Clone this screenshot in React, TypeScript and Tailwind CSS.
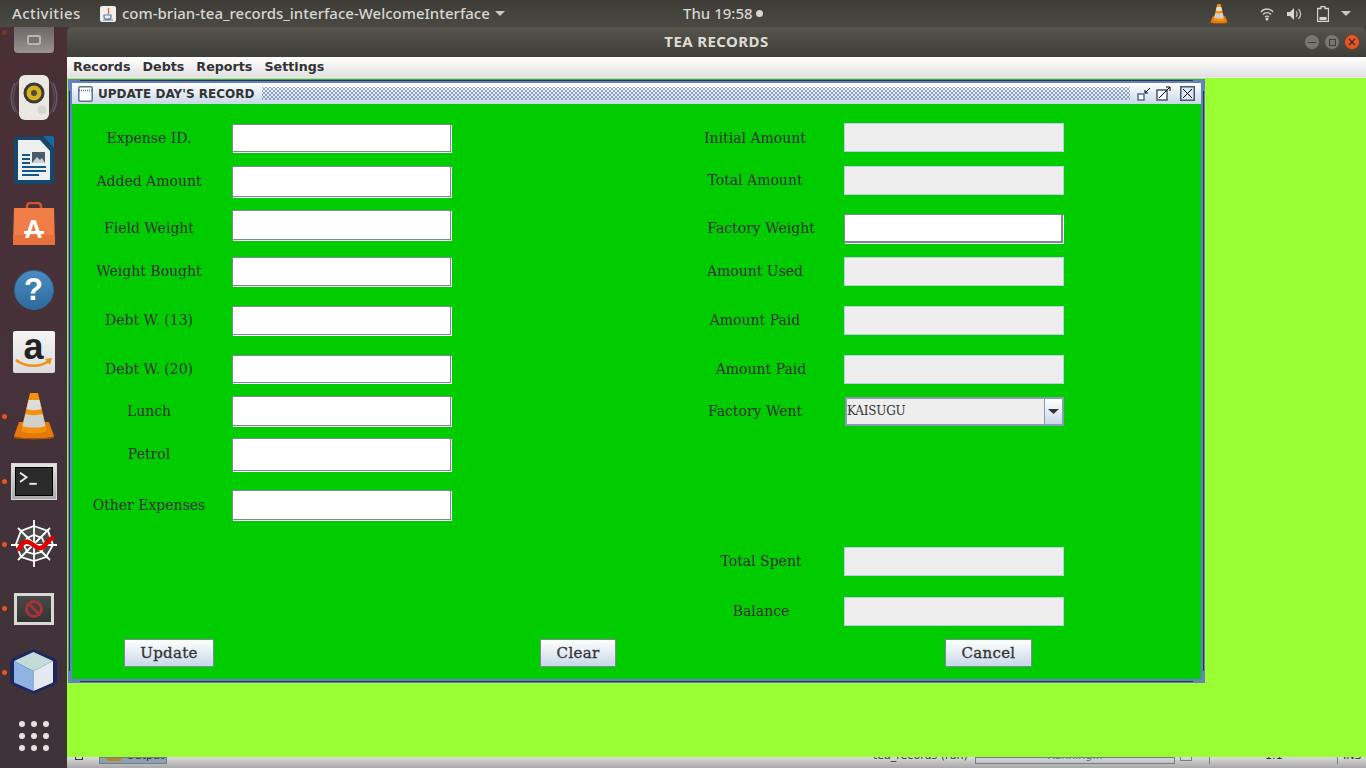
import React from 'react';

type Row = { label: string; gap: string; h: string; box: string; shift: string; kind?: 'edit' | 'off' | 'focus' | 'combo' };

const serif = "font-['DejaVu_Serif','Liberation_Serif',serif]";
const sans = "font-['DejaVu_Sans','Liberation_Sans',sans-serif]";

const leftRows: Row[] = [
  { label: 'Expense ID.', gap: 'mt-[20px]', h: 'h-[29px]', box: 'w-[144px] ml-[5px] mr-[11px]', shift: '' },
  { label: 'Added Amount', gap: 'mt-[13px]', h: 'h-[32px]', box: 'w-[144px] ml-[5px] mr-[11px]', shift: 'pb-[2px]' },
  { label: 'Field Weight', gap: 'mt-[12px]', h: 'h-[31px]', box: 'w-[144px] ml-[5px] mr-[11px]', shift: 'pt-[5px]' },
  { label: 'Weight Bought', gap: 'mt-[16px]', h: 'h-[30px]', box: 'w-[144px] ml-[5px] mr-[11px]', shift: 'pb-[2px]' },
  { label: 'Debt W. (13)', gap: 'mt-[19px]', h: 'h-[30px]', box: 'w-[144px] ml-[5px] mr-[11px]', shift: 'pb-[2px]' },
  { label: 'Debt W. (20)', gap: 'mt-[19px]', h: 'h-[29px]', box: 'w-[144px] ml-[5px] mr-[11px]', shift: '' },
  { label: 'Lunch', gap: 'mt-[12px]', h: 'h-[31px]', box: 'w-[144px] ml-[5px] mr-[11px]', shift: '' },
  { label: 'Petrol', gap: 'mt-[11px]', h: 'h-[34px]', box: 'w-[144px] ml-[5px] mr-[11px]', shift: 'pb-[2px]' },
  { label: 'Other Expenses', gap: 'mt-[18px]', h: 'h-[31px]', box: 'w-[144px] ml-[5px] mr-[11px]', shift: '' },
];

const rightRows: Row[] = [
  { label: 'Initial Amount', gap: 'mt-[19px]', h: 'h-[29px]', box: 'w-[130px] mr-[24px]', shift: 'pt-[1px]', kind: 'off' },
  { label: 'Total Amount', gap: 'mt-[14px]', h: 'h-[29px]', box: 'w-[130px] mr-[24px]', shift: '', kind: 'off' },
  { label: 'Factory Weight', gap: 'mt-[19px]', h: 'h-[29px]', box: 'w-[142px] mr-[12px]', shift: '', kind: 'focus' },
  { label: 'Amount Used', gap: 'mt-[14px]', h: 'h-[29px]', box: 'w-[130px] mr-[24px]', shift: 'pb-[1px]', kind: 'off' },
  { label: 'Amount Paid', gap: 'mt-[20px]', h: 'h-[29px]', box: 'w-[130px] mr-[24px]', shift: '', kind: 'off' },
  { label: 'Amount Paid', gap: 'mt-[20px]', h: 'h-[29px]', box: 'w-[142px] mr-[12px]', shift: '', kind: 'off' },
  { label: 'Factory Went', gap: 'mt-[13px]', h: 'h-[29px]', box: 'w-[130px] mr-[24px]', shift: '', kind: 'combo' },
  { label: 'Total Spent', gap: 'mt-[121px]', h: 'h-[29px]', box: 'w-[142px] mr-[12px]', shift: 'pb-[1px]', kind: 'off' },
  { label: 'Balance', gap: 'mt-[21px]', h: 'h-[29px]', box: 'w-[142px] mr-[12px]', shift: '', kind: 'off' },
];

function Field({ row }: { row: Row }) {
  return (
    <div className={`flex ${row.gap} ${row.h}`}>
      <div className={`${row.box} ${row.shift} flex items-center justify-center text-[14px] text-[#333333] ${serif}`}>{row.label}</div>
      {row.kind === 'combo' ? (
        <div className="flex w-[219px] h-full ml-[1px] border-2 border-[#8a9ab5] bg-[#eeeeee]">
          <div className={`flex-1 flex items-center pb-[2px] text-[12px] tracking-[-0.2px] text-[#333333] ${serif}`}>KAISUGU</div>
          <div className="w-[18px] flex items-center justify-center border-l border-[#8a9ab5] bg-gradient-to-b from-white to-[#c8d8e8]">
            <svg width="11" height="5" viewBox="0 0 11 5"><path d="M0 0h11L5.500 5z" fill="#333333" /></svg>
          </div>
        </div>
      ) : row.kind === 'off' ? (
        <div className="w-[220px] h-full border border-[#b8cfe5] bg-[#eeeeee]" />
      ) : row.kind === 'focus' ? (
        <div className="w-[219px] h-full border border-[#7a8a99] border-b-2 border-r-2 bg-white shadow-[1px_1px_0_#ffffff]" />
      ) : (
        <div className="w-[219px] h-[calc(100%-1px)] border border-[#7a8a99] bg-white shadow-[1px_1px_0_#ffffff]" />
      )}
    </div>
  );
}

function SwingButton({ label, cls }: { label: string; cls: string }) {
  return (
    <div className={`${cls} h-[28px] flex items-center justify-center border border-[#7a8a99] bg-gradient-to-b from-white to-[#c8d8e8] text-[15px] tracking-[0.3px] [-webkit-text-stroke:0.3px_#333333] text-[#333333] ${serif}`}>
      {label}
    </div>
  );
}

function Cone({ w, h }: { w: number; h: number }) {
  return (
    <svg width={w} height={h} viewBox="0 0 40 47">
      <path d="M5 29h30l5 14c0 3-40 3-40 0z" fill="#e8780a" />
      <path d="M0 43c0 3 40 3 40 0v1.500c0 2.500-40 2.500-40 0z" fill="#a8560a" />
      <path d="M16 0h8l9 38c-5 3-21 3-26 0z" fill="#f5910f" />
      <path d="M14.500 7h11l2 9c-4 1.500-11 1.500-15 0z" fill="#dcdcd8" />
      <path d="M11.500 21c4 1.500 13 1.500 17 0l3 12c-5 2-18 2-23 0z" fill="#d0d0cc" />
    </svg>
  );
}

function Dock() {
  return (
    <div className="relative w-[67px] h-[741px] shrink-0 flex flex-col items-center bg-gradient-to-b from-[#4a2f35] via-[#45323a] to-[#3d3338]">
      <span className="absolute left-[2px] top-[3px] w-[5px] h-[5px] rounded-full bg-[#7a3528]" />
      {[387, 452, 515, 579, 643].map((t, i) => (
        <span key={i} className="absolute left-[2px] w-[5px] h-[5px] rounded-full bg-[#e95420]" style={{ top: t }} />
      ))}
      {/* dragged launcher icon */}
      <div className="w-[40px] h-[26px] flex items-center justify-center rounded-b-sm bg-gradient-to-b from-[#6d6768] to-[#989292]">
        <div className="w-[14px] h-[10px] rounded-[2px] border-2 border-[#b8b4b2] bg-[#77706f]" />
      </div>
      <svg className="mt-[22px]" width="48" height="45" viewBox="0 0 48 45">
        <g fill="none" stroke="#7f8fa8" strokeWidth="1.500" opacity="0.45">
          <path d="M5 8c-5 9-5 20 0 29M43 8c5 9 5 20 0 29" />
          <path d="M8 6c-6 10-6 23 0 33M40 6c6 10 6 23 0 33" opacity="0.6" />
        </g>
        <rect x="9" y="0" width="30" height="45" rx="6" fill="#e9e9e2" />
        <circle cx="24" cy="18" r="10.500" fill="#3a3a36" />
        <circle cx="24" cy="18" r="7.500" fill="#d8b21c" />
        <circle cx="24" cy="18" r="3" fill="#4a4a40" />
        <circle cx="32" cy="35" r="4.500" fill="#d6d6d0" />
      </svg>
      <svg className="mt-[16px]" width="40" height="48" viewBox="0 0 40 48">
        <path d="M0 5a4 4 0 0 1 4-4h24l12 12v31a4 4 0 0 1-4 4H4a4 4 0 0 1-4-4z" fill="#12496f" />
        <path d="M29 0h9a2 2 0 0 1 2 2v10z" fill="#0f6aa5" />
        <path d="M4 4h22l10 11v29H4z" fill="#eef0f0" />
        <rect x="8" y="18" width="8" height="2" fill="#12568a" />
        <rect x="8" y="22" width="8" height="2" fill="#12568a" />
        <rect x="8" y="26" width="8" height="2" fill="#12568a" />
        <rect x="18" y="16" width="13" height="11" fill="#4a5a6a" />
        <path d="M18 27l5-6 3 3 2-2 3 5z" fill="#c8d0d8" />
        <rect x="8" y="30" width="24" height="2" fill="#12568a" />
        <rect x="8" y="34" width="24" height="2" fill="#12568a" />
        <rect x="8" y="38" width="17" height="2" fill="#12568a" />
      </svg>
      <div className="relative mt-[18px] w-[42px] h-[43px]">
        <svg className="absolute inset-0" width="42" height="43" viewBox="0 0 42 43">
          <path d="M14 12V4a3 3 0 0 1 3-3h8a3 3 0 0 1 3 3v8" fill="none" stroke="#d0552c" strokeWidth="2.500" />
          <path d="M1 6h40l1 37H0z" fill="#f07d45" />
          <path d="M0 33h42v10H0z" fill="#e8703a" />
        </svg>
        <span className="absolute inset-x-0 top-[15px] text-center text-[25px] leading-[25px] font-bold text-white font-['Liberation_Sans',sans-serif]">A</span>
        <span className="absolute left-[11px] top-[29px] w-[20px] h-[3px] bg-white" />
      </div>
      <div className="relative mt-[25px] w-[40px] h-[40px] rounded-full border border-[#2d6a9c] bg-gradient-to-b from-[#4a8dc0] to-[#2f6a9c] flex items-center justify-center text-[31px] font-bold text-white font-['Liberation_Sans',sans-serif]">?</div>
      <div className="relative mt-[21px] w-[42px] h-[42px] rounded-[2px] bg-gradient-to-b from-[#f5f5f5] to-[#dcdcdc]">
        <span className="absolute inset-x-0 top-[-3px] text-center text-[36px] leading-[38px] font-bold text-[#222222] font-['Liberation_Sans',sans-serif]">a</span>
        <svg className="absolute left-[2px] top-[27px]" width="38" height="12" viewBox="0 0 38 12">
          <path d="M1 2c9 7 23 8 33 1" fill="none" stroke="#f08f12" strokeWidth="2.500" />
          <path d="M30 1l7-1-2 7z" fill="#f08f12" />
        </svg>
      </div>
      <div className="mt-[20px] h-[47px]"><Cone w={40} h={47} /></div>
      <div className="mt-[23px] w-[46px] h-[37px] border border-[#d8d8d4] bg-gradient-to-b from-[#e4e4e0] to-[#a8a8a4] p-[3px]">
        <svg width="38" height="29" viewBox="0 0 38 29" className="bg-[#2b2b2b] border border-black">
          <path d="M4 5l7 5-7 5" fill="none" stroke="#eeeeee" strokeWidth="2" />
          <path d="M14 17h8" stroke="#eeeeee" strokeWidth="2" />
        </svg>
      </div>
      <svg className="mt-[20px]" width="46" height="47" viewBox="0 0 46 47">
        <path d="M23 6l14 5 5 14-7 12-12 4-13-4-5-13 5-13z" fill="#4a4a4a" />
        <g fill="none" stroke="#ffffff" strokeWidth="1.800">
          <path d="M23 0v47M0 25h46M7 8l32 32M39 8L7 40" />
          <path d="M23 6l14 5 5 14-7 12-12 4-13-4-5-13 5-13z" />
          <path d="M23 15l8 3 3 7-4 7-7 2-7-2-3-7 3-7z" />
        </g>
        <path d="M8 29c4-9 9-8 13-5s8 7 13 1 5-6 7-7" fill="none" stroke="#e00000" strokeWidth="4.500" strokeLinecap="round" />
      </svg>
      <div className="mt-[26px] w-[40px] h-[32px] border-[3px] border-[#d8d8d4] bg-gradient-to-b from-[#4a4a4a] to-[#333333] flex items-center justify-center">
        <svg width="20" height="20" viewBox="0 0 20 20">
          <circle cx="10" cy="10" r="9" fill="#a83238" />
          <circle cx="10" cy="10" r="6" fill="#3f3f3f" />
          <path d="M5 5l10 10" stroke="#a83238" strokeWidth="3" />
        </svg>
      </div>
      <svg className="mt-[23px]" width="47" height="47" viewBox="0 0 47 47">
        <path d="M23.500 1L44 10c2 1 3 3 3 5v17c0 2-1 4-3 5L23.500 46 3 37c-2-1-3-3-3-5V15c0-2 1-4 3-5z" fill="#20265e" />
        <path d="M23.500 4L43 13 23.500 23 4 13z" fill="#c4dcd8" />
        <path d="M4 13l19.500 10v20L5 35c-1-.5-1-1-1-2z" fill="#8fb4e4" />
        <path d="M43 13L23.500 23v20L42 35c1-.5 1-1 1-2z" fill="#e2eaf0" />
      </svg>
      <div className="mt-[26px] grid grid-cols-3 gap-x-[6px] gap-y-[6px]">
        {Array.from({ length: 9 }).map((_, i) => (
          <span key={i} className="w-[6px] h-[6px] rounded-full bg-[#e6e2e2]" />
        ))}
      </div>
    </div>
  );
}

export default function App() {
  return (
    <div className="w-[1366px] h-[768px] overflow-hidden flex flex-col bg-[#3c3b37]">
      {/* GNOME top bar */}
      <div className="h-[27px] shrink-0 flex items-center bg-gradient-to-b from-[#3d3c37] to-[#4a4943] text-[15px] font-medium text-[#d6d6d2] font-['Noto_Sans','Open_Sans',sans-serif]">
        <span className="ml-[12px] w-[68px] tracking-[0.4px]">Activities</span>
        <div className="ml-[20px] w-[16px] h-[16px] rounded-[2px] bg-[#f0efec] flex items-center justify-center">
          <svg width="12" height="14" viewBox="0 0 12 14">
            <path d="M7 1C5 3 8 4 6 7" fill="none" stroke="#d9622a" strokeWidth="1.300" />
            <path d="M2 8h7v2a2 2 0 0 1-2 2H4a2 2 0 0 1-2-2zM1 13h10" fill="none" stroke="#5a7fa8" strokeWidth="1.200" />
          </svg>
        </div>
        <span className="ml-[6px] w-[368px] whitespace-nowrap">com-brian-tea_records_interface-WelcomeInterface</span>
        <svg className="ml-[5px]" width="10" height="5" viewBox="0 0 10 5"><path d="M0 0h10L5 5z" fill="#c8c8c4" /></svg>
        <span className="ml-[178px] whitespace-nowrap">Thu 19:58</span>
        <span className="ml-[3px] w-[7px] h-[7px] rounded-full bg-[#d6d6d2]" />
        <div className="ml-auto flex items-center pr-[15px]">
          <div className="w-[18px] h-[20px]"><Cone w={18} h={20} /></div>
          <svg className="ml-[32px]" width="14" height="14" viewBox="0 0 14 14">
            <path d="M1 5c3-4 9-4 12 0M3 7.500c2-2.500 6-2.500 8 0M5 10c1-1 3-1 4 0" fill="none" stroke="#c8c8c4" strokeWidth="1.400" />
            <circle cx="7" cy="12" r="1.500" fill="#d6d6d2" />
          </svg>
          <svg className="ml-[13px]" width="15" height="14" viewBox="0 0 15 14">
            <path d="M0 5h3l4-4v12l-4-4H0z" fill="#d6d6d2" />
            <path d="M9 4c1.500 2 1.500 4 0 6M11.500 2c2.500 3 2.500 7 0 10" fill="none" stroke="#c8c8c4" strokeWidth="1.200" />
          </svg>
          <svg className="ml-[15px]" width="12" height="16" viewBox="0 0 12 16">
            <path d="M4 0.500h4v2h3.500v13H0.500v-13H4z" fill="none" stroke="#d6d6d2" strokeWidth="1.300" />
            <rect x="2.500" y="11" width="7" height="3" fill="#d6d6d2" />
          </svg>
          <svg className="ml-[12px]" width="10" height="5" viewBox="0 0 10 5"><path d="M0 0h10L5 5z" fill="#c8c8c4" /></svg>
        </div>
      </div>

      <div className="flex flex-1 min-h-0">
        <Dock />
        <div className="flex-1 min-w-0 flex flex-col bg-[#3c3b37]">
          {/* Window title bar */}
          <div className="relative h-[30px] shrink-0 flex items-center justify-center pb-[1px] rounded-t-[5px] bg-gradient-to-b from-[#56544d] to-[#3e3d38] text-[15px] font-bold tracking-[0.4px] text-[#dfdbd2] font-['Noto_Sans','Open_Sans',sans-serif]">
            TEA RECORDS
            <div className="absolute right-[6px] top-[7px] flex gap-[4px]">
              <div className="w-[16px] h-[16px] rounded-full bg-[#777671] border border-[#4a4944] flex items-center justify-center"><span className="w-[8px] h-[1px] bg-[#3e3d38]" /></div>
              <div className="w-[16px] h-[16px] rounded-full bg-[#777671] border border-[#4a4944] flex items-center justify-center"><span className="w-[7px] h-[7px] border border-[#3e3d38]" /></div>
              <div className="w-[16px] h-[16px] rounded-full bg-[#e2572a] border border-[#7c3a20] flex items-center justify-center">
                <svg width="8" height="8" viewBox="0 0 8 8"><path d="M1 1l6 6M7 1L1 7" stroke="#4a2415" strokeWidth="1.200" /></svg>
              </div>
            </div>
          </div>
          {/* Menu bar */}
          <div className={`h-[20px] shrink-0 flex items-center pl-[6px] gap-[12px] bg-gradient-to-b from-white to-[#e2e2e2] text-[12.700px] font-bold text-[#333333] ${sans}`}>
            <span>Records</span>
            <span>Debts</span>
            <span>Reports</span>
            <span>Settings</span>
          </div>

          {/* Desktop pane */}
          <div className="relative flex-1 min-h-0 bg-[#99ff33] border-t border-[#e8e8e8]">
            {/* Internal frame */}
            <div className="absolute left-[1px] top-[1px] w-[1137px] h-[604px] p-[4px] bg-[#6382bf]">
              <span className="absolute left-[12px] right-[12px] top-[1px] h-[1px] bg-[#2a3350]" />
              <span className="absolute left-[12px] right-[12px] bottom-[1px] h-[1px] bg-[#2a3350]" />
              <span className="absolute left-[1px] top-[12px] bottom-[12px] w-[1px] bg-[#2a3350]" />
              <span className="absolute right-[1px] top-[12px] bottom-[12px] w-[1px] bg-[#2a3350]" />
              <div className="relative h-full flex flex-col">
                <div className="h-[21px] shrink-0 flex items-center bg-gradient-to-b from-white to-[#c8d8e8]">
                  <svg className="ml-[6px]" width="15" height="16" viewBox="0 0 15 16">
                    <rect x="0.750" y="0.750" width="13.500" height="14.500" rx="1.500" fill="#ffffff" stroke="#5f7090" strokeWidth="1.500" />
                    <path d="M1 4.500h13" stroke="#5f7090" strokeWidth="1.500" strokeDasharray="1 1" />
                  </svg>
                  <span className={`ml-[5px] w-[164px] whitespace-nowrap text-[12px] font-bold text-[#333333] ${sans}`}>UPDATE DAY'S RECORD</span>
                  <div className="w-[868px] h-[13px] bg-[radial-gradient(circle,#5f7aad_0.6px,transparent_0.9px),radial-gradient(circle,#5f7aad_0.6px,transparent_0.9px)] bg-[length:4px_4px] bg-[position:0_0,2px_2px]" />
                  <svg className="ml-[7px]" width="14" height="14" viewBox="0 0 14 14">
                    <rect x="1" y="7" width="6" height="6" fill="#ffffff" stroke="#5a6a8a" strokeWidth="1.500" />
                    <path d="M13 1L8 6M8 3v3h3" fill="none" stroke="#000000" />
                  </svg>
                  <svg className="ml-[5px]" width="15" height="15" viewBox="0 0 15 15">
                    <rect x="1" y="4" width="10" height="10" fill="#ffffff" stroke="#44557a" strokeWidth="1.500" />
                    <path d="M3 12l11-11M10 1h4v4" fill="none" stroke="#000000" />
                  </svg>
                  <svg className="ml-[9px]" width="15" height="15" viewBox="0 0 15 15">
                    <rect x="0.750" y="0.750" width="13.500" height="13.500" fill="#dfe8f2" stroke="#44557a" strokeWidth="1.500" />
                    <path d="M3 3l9 9M12 3l-9 9" stroke="#000000" />
                  </svg>
                </div>
                <div className="flex-1 min-h-0 bg-[#00cc00] flex flex-col">
                  <div className="flex h-[522px] shrink-0">
                    <div className="w-[618px]">
                      {leftRows.map((r) => <Field key={r.label} row={r} />)}
                    </div>
                    <div>
                      {rightRows.map((r, i) => <Field key={i} row={r} />)}
                    </div>
                  </div>
                  <div className="flex mt-[13px] pl-[52px]">
                    <SwingButton label="Update" cls="w-[90px]" />
                    <SwingButton label="Clear" cls="ml-[326px] w-[76px]" />
                    <SwingButton label="Cancel" cls="ml-[329px] w-[87px]" />
                  </div>
                </div>
              </div>
            </div>
          </div>

          {/* Status strip, mostly hidden behind the pane */}
          <div className={`h-[11px] shrink-0 overflow-hidden flex items-start bg-gradient-to-b from-[#dcdcdc] to-[#a8a8a8] text-[11px] text-[#333333] ${sans}`}>
            <span className="ml-[8px] w-[8px] h-[3px] border border-t-0 border-[#333333]" />
            <div className="ml-[16px] w-[68px] h-[7px] flex border border-[#6f7f90] bg-[#90a0b0] overflow-hidden">
              <span className="ml-[6px] w-[16px] h-[3px] rounded-b-full bg-[#b8862a]" />
              <span className="ml-[4px] mt-[-10px]">Output</span>
            </div>
            <div className="ml-[706px] w-[102px] mt-[-9px] whitespace-nowrap">tea_records (run)</div>
            <div className="w-[200px] h-[7px] border border-[#6f7f90] overflow-hidden text-center text-[#5a7090]">
              <div className="mt-[-10px]">Running...</div>
            </div>
            <span className="ml-[5px] w-[12px] h-[4px] border border-t-0 border-[#6f7f90]" />
            <span className="ml-[17px] w-[1px] h-[7px] bg-[#6f7f90]" />
            <div className="ml-[55px] w-[72px] mt-[-9px]">1:1</div>
            <span className="w-[1px] h-[7px] bg-[#6f7f90]" />
            <div className="ml-[5px] mt-[-9px]">INS</div>
          </div>
        </div>
      </div>
    </div>
  );
}
